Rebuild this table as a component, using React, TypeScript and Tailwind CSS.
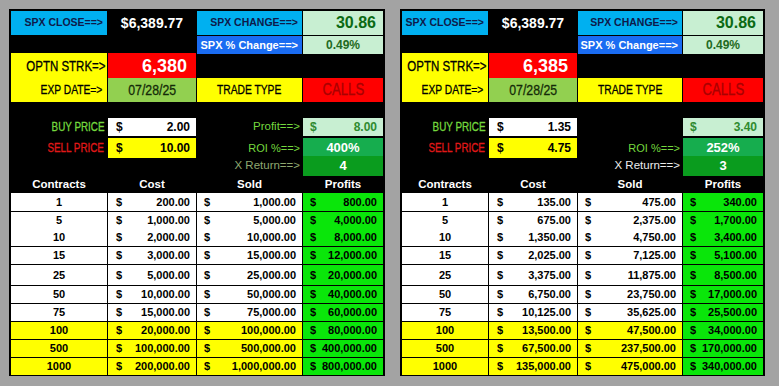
import React from 'react';

type TableRow = { n: string; cost: string; sold: string; profit: string };

type PanelData = {
  cols: string;
  close: string;
  change: string;
  pct: string;
  strike: string;
  date: string;
  buy: string;
  sell: string;
  profit: string;
  roi: string;
  xret: string;
  showProfitLabel: boolean;
  xLabelClass: string;
  rows: TableRow[];
};

// row heights / spacing measured from the sheet
const ROW_SIZES = [
  'h-[18px] mt-[1px]',
  'h-[16px] mt-[1px]',
  'h-[17px] mt-[1px]',
  'h-[17px] mt-[1px]',
  'h-[20px] mt-[1px]',
  'h-[17px] mt-[1px]',
  'h-[16px] mt-[1px]',
  'h-[16px] mt-[2px]',
  'h-[16px] mt-[2px]',
  'h-[16px] mt-[2px]',
];

const left: PanelData = {
  cols: 'grid-cols-[96px_88px_105px_80px]',
  close: '$6,389.77',
  change: '30.86',
  pct: '0.49%',
  strike: '6,380',
  date: '07/28/25',
  buy: '2.00',
  sell: '10.00',
  profit: '8.00',
  roi: '400%',
  xret: '4',
  showProfitLabel: true,
  xLabelClass: 'text-[#8fa870]',
  rows: [
    { n: '1', cost: '200.00', sold: '1,000.00', profit: '800.00' },
    { n: '5', cost: '1,000.00', sold: '5,000.00', profit: '4,000.00' },
    { n: '10', cost: '2,000.00', sold: '10,000.00', profit: '8,000.00' },
    { n: '15', cost: '3,000.00', sold: '15,000.00', profit: '12,000.00' },
    { n: '25', cost: '5,000.00', sold: '25,000.00', profit: '20,000.00' },
    { n: '50', cost: '10,000.00', sold: '50,000.00', profit: '40,000.00' },
    { n: '75', cost: '15,000.00', sold: '75,000.00', profit: '60,000.00' },
    { n: '100', cost: '20,000.00', sold: '100,000.00', profit: '80,000.00' },
    { n: '500', cost: '100,000.00', sold: '500,000.00', profit: '400,000.00' },
    { n: '1000', cost: '200,000.00', sold: '1,000,000.00', profit: '800,000.00' },
  ],
};

const right: PanelData = {
  cols: 'grid-cols-[86px_88px_104px_80px]',
  close: '$6,389.77',
  change: '30.86',
  pct: '0.49%',
  strike: '6,385',
  date: '07/28/25',
  buy: '1.35',
  sell: '4.75',
  profit: '3.40',
  roi: '252%',
  xret: '3',
  showProfitLabel: false,
  xLabelClass: 'text-[#ececec]',
  rows: [
    { n: '1', cost: '135.00', sold: '475.00', profit: '340.00' },
    { n: '5', cost: '675.00', sold: '2,375.00', profit: '1,700.00' },
    { n: '10', cost: '1,350.00', sold: '4,750.00', profit: '3,400.00' },
    { n: '15', cost: '2,025.00', sold: '7,125.00', profit: '5,100.00' },
    { n: '25', cost: '3,375.00', sold: '11,875.00', profit: '8,500.00' },
    { n: '50', cost: '6,750.00', sold: '23,750.00', profit: '17,000.00' },
    { n: '75', cost: '10,125.00', sold: '35,625.00', profit: '25,500.00' },
    { n: '100', cost: '13,500.00', sold: '47,500.00', profit: '34,000.00' },
    { n: '500', cost: '67,500.00', sold: '237,500.00', profit: '170,000.00' },
    { n: '1000', cost: '135,000.00', sold: '475,000.00', profit: '340,000.00' },
  ],
};

// the sheet uses a condensed face; squeeze Liberation Sans horizontally
const Narrow: React.FC<{ children: React.ReactNode; center?: boolean }> = ({ children, center }) => (
  <span
    className={`inline-block whitespace-nowrap scale-x-[0.82] [-webkit-text-stroke:0.3px_currentColor] ${center ? 'origin-center' : 'origin-right'}`}
  >
    {children}
  </span>
);

const Money: React.FC<{ value: string; className?: string }> = ({ value, className = '' }) => (
  <div className={`flex items-center justify-between whitespace-nowrap pl-[7px] pr-[6px] ${className}`}>
    <span>$</span>
    <span>{value}</span>
  </div>
);

const Panel: React.FC<{ d: PanelData }> = ({ d }) => {
  const row = `grid ${d.cols} gap-x-[1px] whitespace-nowrap`;
  return (
    <div className="bg-black p-[2px] flex flex-col">
      {/* SPX close / change */}
      <div className={`${row} h-[23px]`}>
        <div className="bg-[#00b0f0] flex items-center justify-end pr-[4px] text-[10.5px] font-bold text-[#0e1a4a]">SPX CLOSE==&gt;</div>
        <div className="flex items-center justify-center text-[14px] font-bold text-white">{d.close}</div>
        <div className="bg-[#00b0f0] flex items-center justify-end pr-[4px] text-[10.5px] font-bold text-[#0e1a4a]">SPX CHANGE==&gt;</div>
        <div className="bg-[#c8efd2] flex items-center justify-end pr-[7px] text-[16px] font-bold text-[#0b6a14]">{d.change}</div>
      </div>
      <div className={`${row} h-[16px] mt-[2px]`}>
        <div />
        <div />
        <div className="bg-[#1a6cf2] flex items-center justify-end pr-[4px] text-[11px] font-bold text-white">SPX % Change==&gt;</div>
        <div className="bg-[#c8efd2] flex items-center justify-center text-[12px] font-bold text-[#1f6a22]">{d.pct}</div>
      </div>
      {/* strike / expiry */}
      <div className={`${row} h-[23px] mt-[1px]`}>
        <div className="bg-[#ffff00] flex items-center justify-end pr-[2px] text-[14px] text-black">
          <Narrow>OPTN STRK=&gt;</Narrow>
        </div>
        <div className="bg-[#ff0000] flex items-center justify-end pr-[9px] text-[18px] font-bold text-white">{d.strike}</div>
        <div />
        <div />
      </div>
      <div className={`${row} h-[18px] mt-[2px]`}>
        <div className="bg-[#ffff00] flex items-center justify-end pr-[5px] text-[12.5px] text-black">
          <Narrow>EXP DATE=&gt;</Narrow>
        </div>
        <div className="bg-[#92d050] flex items-center justify-center text-[15px] text-[#142a08]">
          <Narrow center>{d.date}</Narrow>
        </div>
        <div className="bg-[#ffff00] flex items-center justify-center text-[12.5px] text-black">
          <Narrow center>TRADE TYPE</Narrow>
        </div>
        <div className="bg-[#ff0000] flex items-center justify-center text-[16px] text-[#a80000]">
          <Narrow center>CALLS</Narrow>
        </div>
      </div>
      {/* prices & returns */}
      <div className={`${row} h-[18px] mt-[22px] text-[12px]`}>
        <div className="flex items-center justify-end pr-[3px] text-[12px] text-[#74d83e]">
          <Narrow>BUY PRICE</Narrow>
        </div>
        <Money value={d.buy} className="bg-white font-bold text-black pl-[8px]" />
        <div className="flex items-center justify-end pr-[2px] text-[11.5px] text-[#74d83e]">
          {d.showProfitLabel ? 'Profit==>' : ''}
        </div>
        <Money value={d.profit} className="bg-[#c8efd2] text-[#2f8a2f] font-bold" />
      </div>
      <div className={`${row} h-[16px] mt-[2px] text-[12px]`}>
        <div className="flex items-center justify-end pr-[3px] text-[12px] text-[#e01818]">
          <Narrow>SELL PRICE</Narrow>
        </div>
        <Money value={d.sell} className="bg-[#ffff00] font-bold text-black pl-[8px]" />
        <div className="flex items-center justify-end pr-[2px] text-[11px] text-[#74d83e]">ROI %==&gt;</div>
        <div className="bg-[#16ad4e] flex items-center justify-center text-[13px] font-bold text-white">{d.roi}</div>
      </div>
      <div className={`${row} h-[18px] mt-[2px]`}>
        <div />
        <div />
        <div className={`flex items-center justify-end pr-[2px] text-[11.5px] ${d.xLabelClass}`}>X Return==&gt;</div>
        <div className="bg-[#0a9c1e] flex items-center justify-center text-[13px] font-bold text-white">{d.xret}</div>
      </div>
      {/* table */}
      <div className={`${row} h-[16px] mt-[2px] text-[11.5px] font-bold text-white`}>
        <div className="flex items-center justify-center">Contracts</div>
        <div className="flex items-center justify-center">Cost</div>
        <div className="flex items-center justify-center">Sold</div>
        <div className="flex items-center justify-center">Profits</div>
      </div>
      {d.rows.map((r, i) => {
        const bg = i >= 7 ? 'bg-[#ffff00]' : 'bg-white';
        return (
          <div key={r.n} className={`${row} ${ROW_SIZES[i]} text-[11px] font-bold text-black`}>
            <div className={`${bg} flex items-center justify-center`}>{r.n}</div>
            <Money value={r.cost} className={`${bg} pl-[8px]`} />
            <Money value={r.sold} className={`${bg} pl-[6px]`} />
            <Money value={r.profit} className="bg-[#0ae60a]" />
          </div>
        );
      })}
    </div>
  );
};

export default function App() {
  return (
    <div className="w-[779px] h-[386px] bg-[#a3a3a3] pl-[9px] pt-[9px] flex items-start gap-[15px] font-['Liberation_Sans',Arial,sans-serif] overflow-hidden">
      <Panel d={left} />
      <Panel d={right} />
    </div>
  );
}
